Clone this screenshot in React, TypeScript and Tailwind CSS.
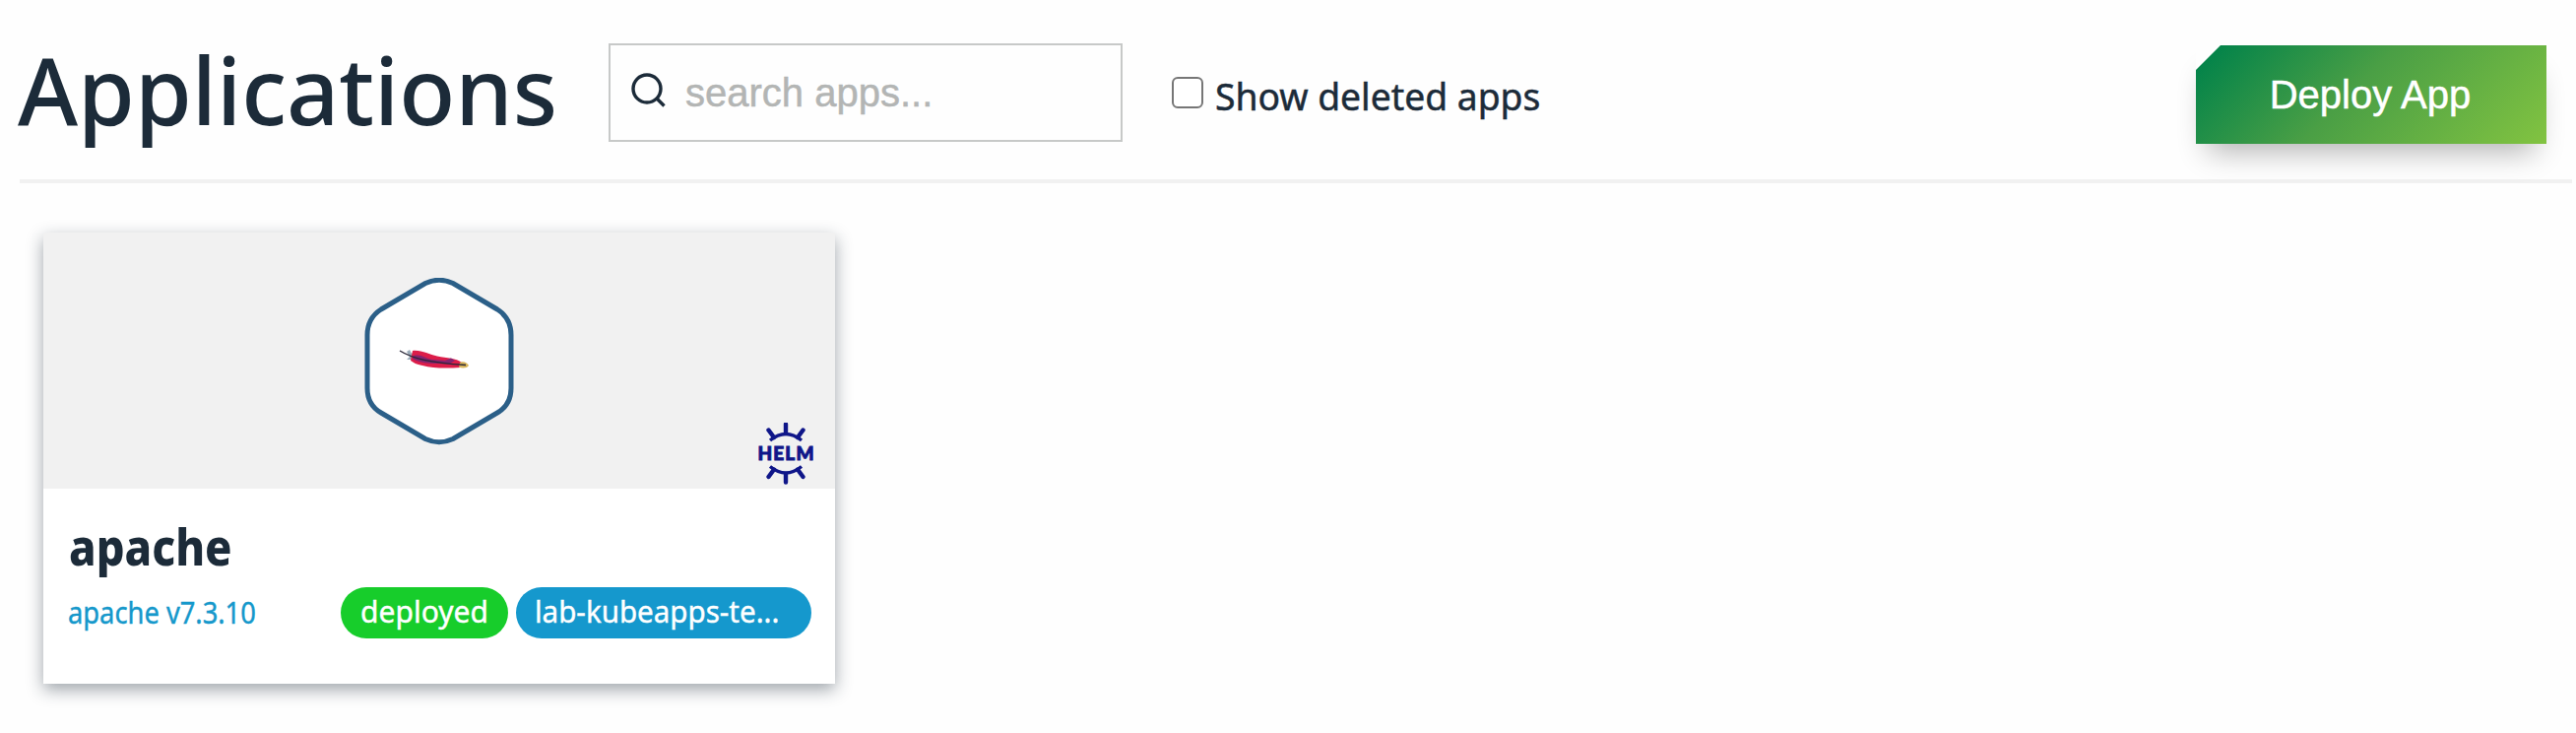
import React from "react";

function Feather() {
  return (
    <svg className="block" width="152" height="170" viewBox="0 0 152 170" fill="none">
      <path d="M62 5.5 Q76 -1 90 5.5 L135 32 Q149 41 149 58 L149 112 Q149 129 135 137 L90 163.500 Q76 170 62 163.500 L17 137 Q3 129 3 112 L3 58 Q3 41 17 32 Z" fill="#fff" stroke="#2b5f88" strokeWidth="5" />
      <path d="M43 75 L46 73 L48 77 L50 75 L49 83 L43 83 L46 80Z" fill="#9aabb9" />
      <path d="M49 74 C58 73 66 78 74 79.500 C84 82 93 81 99 86 L98 91 C83 92 70 92 59 89 C53 88 50 86 47 84Z" fill="#dc1d49" />
      <path d="M50 79 C58 77 62 82 69 83 L82 84 L88 81.500 L92 84 L86 87.500 C73 87 58 88 49 82Z" fill="#86236f" />
      <path d="M97 86 C101 84 105 87 106 89 C104 92 99 92 96 90.500Z" fill="#d8b45a" />
      <path d="M36 74 C49 82 66 86 103 88.500" stroke="#282637" strokeWidth="1.4" />
    </svg>
  );
}

function HelmLogo() {
  return (
    <svg className="block" width="56" height="64" viewBox="0 0 56 64" fill="none">
      <g stroke="#0f1689" strokeWidth="3.4" fill="none">
        <path d="M12 18 Q28 5 44 18 M12 44.500 Q28 57.500 44 44.500" />
        <path d="M28 1.500 V11 M10.500 7.500 L16 15 M45.500 7.500 L40 15 M28 52 V60.500 M10.500 55 L16 47.500 M45.500 55 L40 47.500" strokeWidth="4.4" strokeLinecap="round" />
      </g>
      <text x="-0.5" y="38" textLength="57" lengthAdjust="spacing" fill="#0f1689" stroke="#0f1689" strokeWidth="0.9" fontFamily="Lato" fontWeight="900" fontSize="19">HELM</text>
    </svg>
  );
}

export default function App() {
  return (
    <div className="h-[744px] w-[2616px] overflow-hidden bg-[#fefefe] pl-5 pr-1 font-['Noto_Sans',sans-serif] text-[#1c2b39]">
      <header className="flex h-[186px] items-start border-b-4 border-[#f1f1f1]">
        <h1 className="-ml-0.5 mt-[25px] w-[600px] origin-left scale-x-[0.982] whitespace-nowrap text-[95px] font-medium leading-[130px]">Applications</h1>
        <div className="mt-11 flex h-[100px] w-[522px] items-center border-2 border-[#c7c9c8] pl-[21px]">
          <svg className="-mt-1" width="36" height="36" viewBox="0 0 36 36" fill="none" stroke="#1c2b39" strokeWidth="3.4">
            <circle cx="16" cy="16" r="14" />
            <path d="M25.5 25.5 L33.5 33.5" />
          </svg>
          <span className="ml-[19px] font-['Liberation_Sans',sans-serif] text-[40px] leading-none text-[#b3b5b4] [-webkit-text-stroke:0.5px_#b3b5b4]">search apps...</span>
        </div>
        <label className="ml-[50px] flex items-start">
          <span className="mt-[78px] size-8 rounded-[6px] border-2 border-[#767676] bg-white" />
          <span className="ml-3 mt-[71px] origin-left scale-x-[0.98] whitespace-nowrap text-[38px] leading-[52px] [-webkit-text-stroke:0.5px_#1c2b39]">Show deleted apps</span>
        </label>
        <button className="relative ml-auto mr-[26px] mt-[46px] h-[100px] w-[356px] shadow-[0_20px_30px_-12px_rgba(0,0,0,0.3)]">
          <span className="flex size-full items-center justify-center bg-[linear-gradient(135deg,#00824a_3%,#4a9f45_45%,#82c341)] pr-0.5 font-['Liberation_Sans',sans-serif] text-[40px] text-white [-webkit-text-stroke:0.5px_white]">Deploy App</span>
          <svg className="absolute left-0 top-0" width="25" height="25"><path d="M0 0H25L0 25Z" fill="#fefefe" /></svg>
        </button>
      </header>
      <main className="pl-6 pt-[50px]">
        <article className="h-[458px] w-[804px] bg-white shadow-[0_6px_16px_rgba(28,43,57,0.42)]">
          <div className="relative flex h-[260px] justify-center bg-[#f1f1f1] pt-[46px]">
            <Feather />
            <div className="absolute bottom-[3px] right-[22px]"><HelmLogo /></div>
          </div>
          <div className="px-6 pt-[23px]">
            <h2 className="ml-0.5 h-[77px] origin-left scale-x-[0.89] whitespace-nowrap text-[51px] font-extrabold leading-[70px]">apache</h2>
            <div className="flex h-[52px] items-center text-[30px] leading-[50px]">
              <span className="ml-px w-[277px] origin-left scale-x-[0.91] whitespace-nowrap text-[#1598cb] [-webkit-text-stroke:0.4px_#1598cb]">apache v7.3.10</span>
              <span className="flex h-[52px] w-[170px] justify-center rounded-full bg-[#17cd2b] text-white [-webkit-text-stroke:0.4px_white]"><span>deployed</span></span>
              <span className="ml-2 flex h-[52px] w-[300px] rounded-full bg-[#1598cd] pl-[19px] text-white [-webkit-text-stroke:0.4px_white]"><span className="inline-block origin-left scale-x-[0.985] whitespace-nowrap">lab-kubeapps-te...</span></span>
            </div>
          </div>
        </article>
      </main>
    </div>
  );
}
